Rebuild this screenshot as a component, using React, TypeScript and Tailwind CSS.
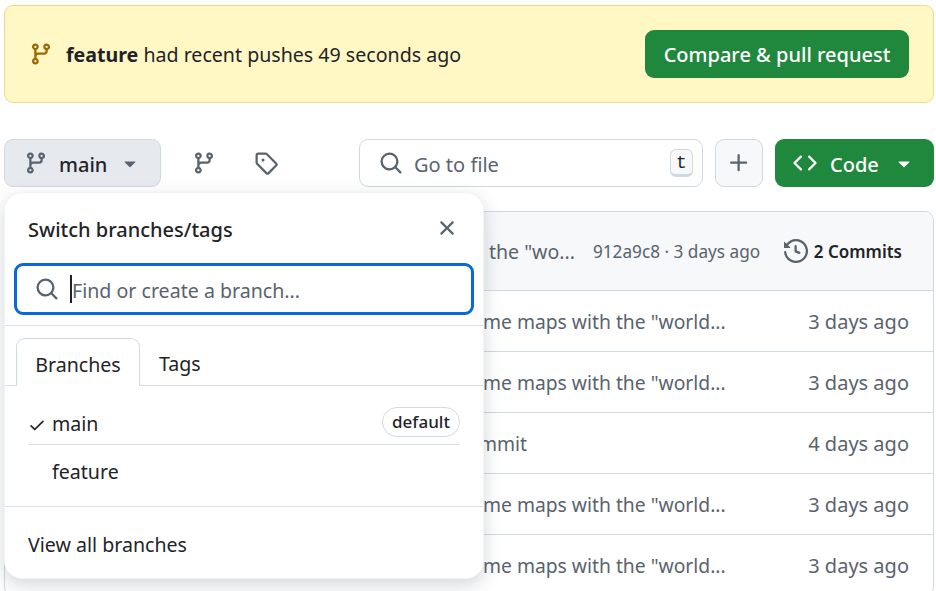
const icons = {
  branch: 'M9.5 3.25a2.25 2.25 0 1 1 3 2.122V6A2.5 2.5 0 0 1 10 8.5H6a1 1 0 0 0-1 1v1.128a2.251 2.251 0 1 1-1.5 0V5.372a2.25 2.25 0 1 1 1.5 0v1.836A2.493 2.493 0 0 1 6 7h4a1 1 0 0 0 1-1v-.628A2.25 2.25 0 0 1 9.5 3.25Zm-6 0a.75.75 0 1 0 1.5 0 .75.75 0 0 0-1.5 0Zm8.25-.75a.75.75 0 1 0 0 1.5.75.75 0 0 0 0-1.5ZM4.25 12a.75.75 0 1 0 0 1.5.75.75 0 0 0 0-1.5Z',
  tag: 'M1 7.775V2.75C1 1.784 1.784 1 2.75 1h5.025c.464 0 .91.184 1.238.513l6.25 6.25a1.75 1.75 0 0 1 0 2.474l-5.026 5.026a1.75 1.75 0 0 1-2.474 0l-6.25-6.25A1.75 1.75 0 0 1 1 7.775Zm1.5 0c0 .066.026.13.073.177l6.25 6.25a.25.25 0 0 0 .354 0l5.025-5.025a.25.25 0 0 0 0-.354l-6.25-6.25a.25.25 0 0 0-.177-.073H2.75a.25.25 0 0 0-.25.25ZM6 5a1 1 0 1 1 0 2 1 1 0 0 1 0-2Z',
  search: 'M10.68 11.74a6 6 0 0 1-7.922-8.982 6 6 0 0 1 8.982 7.922l3.04 3.04a.749.749 0 0 1-.326 1.275.749.749 0 0 1-.734-.215ZM11.5 7a4.499 4.499 0 1 0-8.997 0A4.499 4.499 0 0 0 11.5 7Z',
  plus: 'M7.75 2a.75.75 0 0 1 .75.75V7h4.25a.75.75 0 0 1 0 1.5H8.5v4.25a.75.75 0 0 1-1.5 0V8.5H2.75a.75.75 0 0 1 0-1.5H7V2.75A.75.75 0 0 1 7.75 2Z',
  code: 'm11.28 3.22 4.25 4.25a.75.75 0 0 1 0 1.06l-4.25 4.25a.749.749 0 0 1-1.275-.326.749.749 0 0 1 .215-.734L13.94 8l-3.72-3.72a.749.749 0 0 1 .326-1.275.749.749 0 0 1 .734.215Zm-6.56 0a.751.751 0 0 1 1.042.018.751.751 0 0 1 .018 1.042L2.06 8l3.72 3.72a.749.749 0 0 1-.326 1.275.749.749 0 0 1-.734-.215L.47 8.53a.75.75 0 0 1 0-1.06Z',
  history: 'm.427 1.927 1.215 1.215a8.002 8.002 0 1 1-1.6 5.685.75.75 0 1 1 1.493-.154 6.5 6.5 0 1 0 1.18-4.458l1.358 1.358A.25.25 0 0 1 3.896 6H.25A.25.25 0 0 1 0 5.75V2.104a.25.25 0 0 1 .427-.177ZM7.75 4a.75.75 0 0 1 .75.75v2.992l2.028.812a.75.75 0 0 1-.557 1.392l-2.5-1A.751.751 0 0 1 7 8.25v-3.5A.75.75 0 0 1 7.75 4Z',
  x: 'M3.72 3.72a.75.75 0 0 1 1.06 0L8 6.94l3.22-3.22a.749.749 0 0 1 1.275.326.749.749 0 0 1-.215.734L9.06 8l3.22 3.22a.749.749 0 0 1-.326 1.275.749.749 0 0 1-.734-.215L8 9.06l-3.22 3.22a.751.751 0 0 1-1.042-.018.751.751 0 0 1-.018-1.042L6.94 8 3.72 4.78a.75.75 0 0 1 0-1.06Z',
  check: 'M13.78 4.22a.75.75 0 0 1 0 1.06l-7.25 7.25a.75.75 0 0 1-1.06 0L2.22 9.28a.751.751 0 0 1 .018-1.042.751.751 0 0 1 1.042-.018L6 10.94l6.72-6.72a.75.75 0 0 1 1.06 0Z',
  caret: 'm4.427 7.427 3.396 3.396a.25.25 0 0 0 .354 0l3.396-3.396A.25.25 0 0 0 11.396 7H4.604a.25.25 0 0 0-.177.427Z',
};

function Octicon({ name, size = 24, className = '' }: { name: keyof typeof icons; size?: number; className?: string }) {
  return (
    <svg viewBox="0 0 16 16" width={size} height={size} fill="currentColor" className={`shrink-0 ${className}`}>
      <path d={icons[name]} />
    </svg>
  );
}

// the popup covers the start of each commit message, only the visible end is written
const rows = [
  { message: 'me maps with the "world...', date: '3 days ago', shift: false },
  { message: 'me maps with the "world...', date: '3 days ago', shift: false },
  { message: 'mmit', date: '4 days ago', shift: true },
  { message: 'me maps with the "world...', date: '3 days ago', shift: false },
  { message: 'me maps with the "world...', date: '3 days ago', shift: false },
];

function BranchPopup() {
  return (
    <div className="absolute left-[4px] top-[192px] z-10 w-[480px] h-[387px] bg-white border border-[#f1f3f5] rounded-[18px] shadow-[0_6px_18px_rgba(66,74,83,0.22)]">
      <div className="flex items-center justify-between h-[70px] pl-[23px] pr-[24px]">
        <span className="pt-[3px] text-[20px] font-medium text-[#1f2328]">Switch branches/tags</span>
        <Octicon name="x" className="text-[#59636e]" />
      </div>
      <div className="px-[9px]">
        <div className="flex items-center h-[52px] border-[3px] border-[#0969da] rounded-[9px] pl-[18px]">
          <Octicon name="search" className="text-[#59636e]" />
          <span className="w-[2px] h-[28px] bg-[#1f2328] ml-[11px]" />
          <span className="pt-[3px] text-[19.6px] text-[#59636e]">Find or create a branch...</span>
        </div>
      </div>
      <div className="border-b border-[#d8dee4] h-[11px]" />
      <div className="flex items-end h-[60px] pl-[11px] border-b border-[#d8dee4]">
        <div className="flex items-center justify-center w-[124px] h-[48px] -mb-px pt-[4px] bg-white border border-b-0 border-[#d1d9e0] rounded-t-[9px] text-[19.6px] text-[#1f2328]">Branches</div>
        <div className="flex items-center justify-center h-[48px] px-[19px] pt-[6px] text-[19.6px] text-[#1f2328]">Tags</div>
      </div>
      <div className="mx-[23px] mt-[20px]">
        <div className="flex items-center h-[39px] pb-[7px] border-b border-[#d8dee4]">
          <span className="w-[24px] pt-[6px]">
            <Octicon name="check" size={18} className="text-[#1f2328]" />
          </span>
          <span className="pt-[4px] text-[19.6px] text-[#1f2328]">main</span>
          <span className="ml-auto flex items-center justify-center w-[78px] h-[30px] rounded-full border border-[#d1d9e0] text-[17px] font-medium text-[#1f2328]">default</span>
        </div>
        <div className="flex items-center h-[55px] pl-[24px] pb-[2px] text-[19.6px] text-[#1f2328]">feature</div>
      </div>
      <div className="border-b border-[#d8dee4] mt-[6px]" />
      <div className="flex items-center h-[72px] pl-[23px] pt-[3px] text-[19.6px] text-[#1f2328]">View all branches</div>
    </div>
  );
}

export default function App() {
  return (
    <div className="relative w-[936px] h-[591px] overflow-hidden bg-white pl-[4px] pr-[2px] pt-[5px] font-['Noto_Sans',sans-serif] text-[#1f2328]">
      <div className="flex items-center justify-between h-[98px] bg-[#fff8c5] border border-[#f0d98a] rounded-[9px] pl-[24px] pr-[24px]">
        <div className="flex items-center">
          <Octicon name="branch" className="text-[#9a6700]" />
          <p className="ml-[13px] pt-[2px] text-[19.6px]"><span className="font-bold">feature</span> had recent pushes 49 seconds ago</p>
        </div>
        <button className="h-[48px] w-[264px] pt-[2px] bg-[#1f883d] rounded-[9px] text-white text-[20px] font-medium">Compare &amp; pull request</button>
      </div>

      <div className="flex items-center mt-[36px] h-[48px]">
        <button className="flex items-center w-[157px] h-[48px] pl-[19px] bg-[#e6eaef] border border-[#d1d9e0] rounded-[9px]">
          <Octicon name="branch" className="text-[#59636e]" />
          <span className="ml-[11px] pt-[3px] text-[20px] font-medium">main</span>
          <Octicon name="caret" className="ml-[11px] text-[#59636e]" />
        </button>
        <Octicon name="branch" className="ml-[31px] text-[#59636e]" />
        <Octicon name="tag" className="ml-[38px] text-[#59636e]" />
        <div className="flex items-center w-[344px] h-[48px] ml-[81px] pl-[19px] pr-[9px] border border-[#d1d9e0] rounded-[9px]">
          <Octicon name="search" className="text-[#59636e]" />
          <span className="ml-[11px] pt-[4px] text-[20px] text-[#59636e]">Go to file</span>
          <kbd className="ml-auto flex items-center justify-center w-[23px] h-[28px] pt-[3px] bg-[#f6f8fa] border border-[#d1d9e0] border-b-[3px] rounded-[6px] text-[18px] font-normal font-['Liberation_Mono',monospace]">t</kbd>
        </div>
        <button className="flex items-center justify-center w-[48px] h-[48px] ml-[12px] bg-[#f6f8fa] border border-[#d1d9e0] rounded-[9px]">
          <Octicon name="plus" className="text-[#59636e]" />
        </button>
        <button className="flex items-center w-[159px] h-[48px] ml-[12px] pl-[18px] bg-[#1f883d] rounded-[9px] text-white">
          <Octicon name="code" />
          <span className="ml-[13px] pt-[4px] text-[20px] font-medium">Code</span>
          <Octicon name="caret" className="ml-[13px]" />
        </button>
      </div>

      <div className="mt-[24px] border border-[#d1d9e0] rounded-[9px]">
        <div className="flex items-center h-[78px] pl-[484px] pr-[31px] bg-[#f6f8fa] rounded-t-[9px]">
          <span className="pt-[1px] text-[19.5px] text-[#59636e]">the "wo...</span>
          <span className="ml-[18px] pt-[1px] text-[17.2px] text-[#59636e]">912a9c8 · 3 days ago</span>
          <Octicon name="history" className="ml-auto text-[#59636e]" />
          <span className="ml-[6px] pt-[1px] text-[17px] font-semibold">2 Commits</span>
        </div>
        {rows.map((row, i) => (
          <div key={i} className={row.shift ? 'flex items-center justify-between h-[61px] pl-[474px] pr-[24px] border-t border-[#d1d9e0]' : 'flex items-center justify-between h-[61px] pl-[478px] pr-[24px] border-t border-[#d1d9e0]'}>
            <span className="pt-[2px] text-[19.3px] text-[#59636e]">{row.message}</span>
            <span className="pt-[2px] text-[20px] text-[#59636e]">{row.date}</span>
          </div>
        ))}
      </div>

      <BranchPopup />
    </div>
  );
}
